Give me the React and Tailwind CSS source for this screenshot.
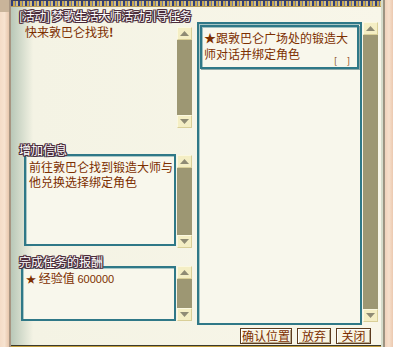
import React from "react";

const Tri = ({ up }) => (
  <svg width="9" height="5" viewBox="0 0 9 5">
    <polygon points={up ? "0,5 9,5 4.5,0" : "0,0 9,0 4.5,5"} fill="#8f8b74" />
  </svg>
);

const Btn = ({ up }) => (
  <div className="h-[13px] shrink-0 flex items-center justify-center bg-[#f4eec4] border border-[#d9cf98] border-t-[#fbf8e0] border-l-[#fbf8e0]">
    <Tri up={up} />
  </div>
);

const Scroll = ({ className }) => (
  <div className={"w-[15px] flex flex-col bg-[#9d9773] " + (className || "")}>
    <Btn up />
    <div className="flex-1" />
    <Btn />
  </div>
);

const outline =
  "[text-shadow:1px_0_0_#4a2b3a,-1px_0_0_#4a2b3a,0_1px_0_#4a2b3a,0_-1px_0_#4a2b3a,1px_1px_0_#4a2b3a,-1px_-1px_0_#4a2b3a,1px_-1px_0_#4a2b3a,-1px_1px_0_#4a2b3a]";

const Box = ({ className, children }) => (
  <div
    className={
      "border-2 border-[#2f7887] bg-[#f8f7ec] shadow-[inset_1px_1px_0_#a9c7c6] " +
      (className || "")
    }
  >
    {children}
  </div>
);

const GameBtn = ({ children, w }) => (
  <div
    className={
      "h-[16px] flex items-center justify-center border border-[#5c3b1e] bg-[#f7f4e2] shadow-[inset_1px_1px_0_#ffffff,inset_-1px_-1px_0_#b8a88a] text-[12px] leading-[14px] text-[#7d2f00] " +
      w
    }
  >
    {children}
  </div>
);

export default function App() {
  return (
    <div
      className="w-[393px] h-[347px] flex overflow-hidden bg-[#f8f6e9]"
      style={{ fontFamily: '"Noto Sans CJK SC", "Noto Sans", sans-serif' }}
    >
      {/* left scroll roll */}
      <div className="w-[10px] h-full flex flex-col">
        <div className="h-[12px] bg-[#c9b49a]" />
        <div className="flex-1 bg-gradient-to-r from-[#f4dcc7] via-[#f7e3d0] to-[#e7c7ad]" />
      </div>
      <div className="w-[2px] h-full bg-[#a79582]" />

      {/* main parchment */}
      <div className="flex-1 h-full flex flex-col bg-gradient-to-r from-[#b9c8b8] via-[#f4f3e4] via-[6%] to-[#f8f6e9]">
        {/* top decorative band */}
        <div className="h-[7px] shrink-0 flex flex-col">
          <div className="h-[1px] bg-[#3b3f5c]" />
          <div className="h-[5px] bg-[repeating-linear-gradient(90deg,#2f3f7e_0px,#2f3f7e_2px,#c7a84f_2px,#c7a84f_4px,#6b75a8_4px,#6b75a8_5px,#d8c07a_5px,#d8c07a_7px)]" />
          <div className="h-[1px] bg-[#b49a5a]" />
        </div>

        <div className="flex-1 flex flex-col pl-[8px] pr-[3px]">
          {/* title */}
          <div
            className={
              "h-[15px] pt-[2px] text-[12px] leading-[13px] text-white tracking-[-0.4px] whitespace-nowrap " +
              outline
            }
          >
            [活动] 梦歌生活大师活动引导任务
          </div>

          <div className="flex-1 flex gap-[5px]">
            {/* left column */}
            <div className="w-[173px] flex flex-col">
              <div className="h-[106px] flex">
                <div className="flex-1 pl-[6px] pt-[3px] text-[12px] leading-[14px] text-[#7d2f00]">
                  快来敦巴仑找我<span className="font-bold">!</span>
                </div>
                <Scroll className="mt-[5px]" />
              </div>

              <div
                className={
                  "relative z-10 mt-[16px] h-[10px] text-[12px] leading-[12px] text-white whitespace-nowrap " +
                  outline
                }
              >
                增加信息
              </div>
              <div className="h-[94px] flex">
                <Box className="ml-[5px] w-[152px] h-[92px] pl-[3px] pt-[3px] text-[12px] leading-[15px] text-[#7d2f00]">
                  <div className="whitespace-nowrap">前往敦巴仑找到锻造大师与</div>
                  <div className="whitespace-nowrap">他兑换选择绑定角色</div>
                </Box>
                <Scroll className="ml-[1px] mt-[1px]" />
              </div>

              <div
                className={
                  "relative z-10 mt-[8px] h-[10px] text-[12px] leading-[12px] text-white whitespace-nowrap " +
                  outline
                }
              >
                完成任务的报酬
              </div>
              <div className="h-[55px] flex">
                <Box className="ml-[2px] w-[155px] h-[55px] pl-[3px] pt-[2px] text-[12px] leading-[15px] text-[#7d2f00] whitespace-nowrap">
                  <span className="text-[10px]">★</span> 经验值{" "}
                  <span className="text-[11px]" style={{ fontFamily: '"Liberation Sans", sans-serif' }}>
                    600000
                  </span>
                </Box>
                <Scroll className="ml-[1px]" />
              </div>
            </div>

            {/* right column */}
            <div className="flex-1 flex flex-col">
              <div className="h-[303px] flex">
                <Box className="w-[165px] h-[303px] p-[1px]">
                  <div className="h-[44px] border-2 border-[#2f7887] shadow-[inset_1px_1px_0_#9fc0c0,1px_1px_0_#8fa9a8] pl-[2px] pt-[3px] text-[12px] leading-[16px] text-[#7d2f00] whitespace-nowrap relative">
                    ★跟敦巴仑广场处的锻造大
                    <br />
                    师对话并绑定角色
                    <div className="absolute right-[6px] bottom-[1px] text-[9px] leading-[10px] tracking-[1px]">
                      [&nbsp;&nbsp;&nbsp;]
                    </div>
                  </div>
                </Box>
                <Scroll className="ml-[1px] h-[300px]" />
              </div>
              <div className="mt-[3px] flex justify-end gap-[5px] pr-[7px]">
                <GameBtn w="w-[52px]">确认位置</GameBtn>
                <GameBtn w="w-[34px]">放弃</GameBtn>
                <GameBtn w="w-[35px]">关闭</GameBtn>
              </div>
            </div>
          </div>
        </div>

        {/* bottom band */}
        <div className="h-[2px] shrink-0 flex flex-col">
          <div className="h-[1px] bg-[#3c3a2c]" />
          <div className="h-[1px] bg-[#c4a040]" />
        </div>
      </div>

      {/* right edge */}
      <div className="w-[2px] h-full bg-[#d5dccb]" />
      <div className="w-[2px] h-full bg-[#9d9482]" />
      <div className="w-[9px] h-full bg-gradient-to-r from-[#f0d2bc] via-[#f6e0cc] to-[#ecc9b0]" />
    </div>
  );
}
